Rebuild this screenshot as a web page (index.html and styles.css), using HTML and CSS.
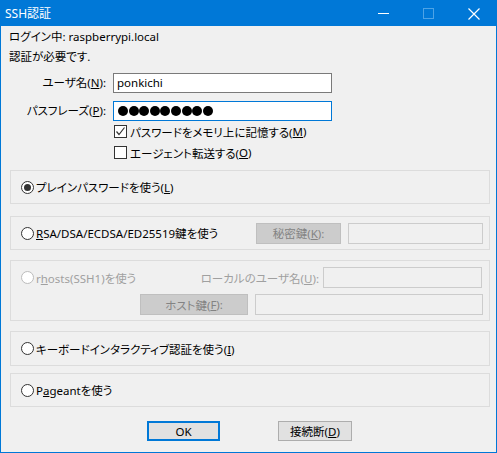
FILE: index.html
```html
<!DOCTYPE html>
<html lang="ja">
<head>
<meta charset="utf-8">
<title>SSH認証</title>
<link rel="stylesheet" href="styles.css">
</head>
<body>
<div class="window">
  <div class="titlebar">
    <span class="title">SSH認証</span>
    <div class="controls">
      <span class="ctl"><svg width="11" height="11" viewBox="0 0 11 11"><path d="M0 5.5H11" stroke="#fff" stroke-width="1"/></svg></span>
      <span class="ctl"><svg width="11" height="11" viewBox="0 0 11 11"><rect x="0.5" y="0.5" width="10" height="10" fill="none" stroke="#4da3e6" stroke-width="1"/></svg></span>
      <span class="ctl"><svg width="12" height="12" viewBox="0 0 12 12"><path d="M0.5 0.5L11.5 11.5M11.5 0.5L0.5 11.5" stroke="#fff" stroke-width="1.2"/></svg></span>
    </div>
  </div>
  <div class="content">
    <div class="line">ログイン中: raspberrypi.local</div>
    <div class="line">認証が必要です.</div>
    <div class="form">
      <span class="lbl">ユーザ名(<u>N</u>):</span>
      <div class="input">ponkichi</div>
      <span class="lbl">パスフレーズ(<u>P</u>):</span>
      <div class="input focus"><i class="dot"></i><i class="dot"></i><i class="dot"></i><i class="dot"></i><i class="dot"></i><i class="dot"></i><i class="dot"></i><i class="dot"></i><i class="dot"></i></div>
    </div>
    <div class="checks">
      <div class="check"><span class="cbox"><svg width="11" height="11" viewBox="0 0 11 11"><path d="M1.5 5.5L4 8.5L9.5 1.5" fill="none" stroke="#333" stroke-width="1.2"/></svg></span>パスワードをメモリ上に記憶する(<u>M</u>)</div>
      <div class="check"><span class="cbox"></span>エージェント転送する(<u>O</u>)</div>
    </div>

    <div class="group g1">
      <span class="radio checked"></span><span>プレインパスワードを使う(<u>L</u>)</span>
    </div>

    <div class="group g2">
      <span class="radio"></span><span><u>R</u>SA/DSA/ECDSA/ED25519鍵を使う</span>
      <div class="right">
        <span class="btn disabled key">秘密鍵(<u>K</u>):</span>
        <span class="input disabled keyfile"></span>
      </div>
    </div>

    <div class="group g3">
      <div class="row">
        <span class="radio disabled"></span><span class="muted">r<u>h</u>osts(SSH1)を使う</span>
        <span class="muted local">ローカルのユーザ名(<u>U</u>):</span>
        <span class="input disabled localuser"></span>
      </div>
      <div class="row row2">
        <span class="btn disabled hostkey">ホスト鍵(<u>F</u>):</span>
        <span class="input disabled hostfile"></span>
      </div>
    </div>

    <div class="group g4">
      <span class="radio"></span><span>キーボードインタラクティブ認証を使う(<u>I</u>)</span>
    </div>

    <div class="group g5">
      <span class="radio"></span><span>P<u>a</u>geantを使う</span>
    </div>

    <div class="buttons">
      <span class="btn default">OK</span>
      <span class="btn">接続断(<u>D</u>)</span>
    </div>
  </div>
</div>
</body>
</html>
```

FILE: styles.css
```css
* { box-sizing: border-box; }
html, body { margin: 0; padding: 0; }
body {
  width: 497px;
  height: 453px;
  overflow: hidden;
  background: #f0f0f0;
  font-family: "Noto Sans", "Noto Sans CJK JP", sans-serif;
  font-size: 11.5px;
  font-feature-settings: "palt";
  color: #000;
}
u { text-decoration: underline; text-underline-offset: 1px; }

.window {
  width: 497px;
  height: 453px;
  border: 1px solid #0078d7;
  background: #f0f0f0;
  display: flex;
  flex-direction: column;
}
.titlebar {
  height: 25px;
  flex-shrink: 0;
  background: #0078d7;
  color: #fff;
  display: flex;
  align-items: center;
}
.title { padding-left: 4px; line-height: 16px; font-size: 12px; }
.controls { margin-left: auto; display: flex; height: 100%; }
.ctl {
  width: 45px;
  display: flex;
  align-items: center;
  justify-content: center;
}
.ctl svg { display: block; }

.content { padding: 1px 6px 0 8px; }
.line { height: 20px; line-height: 20px; white-space: nowrap; }

.form {
  margin-top: 6px;
  display: grid;
  grid-template-columns: 97px 219px;
  column-gap: 7px;
  row-gap: 8px;
  align-items: center;
}
.lbl { text-align: right; white-space: nowrap; line-height: 16px; }
.input {
  display: block;
  height: 20px;
  border: 1px solid #7a7a7a;
  background: #fff;
  padding-left: 3px;
  line-height: 18px;
}
.input.focus {
  border-color: #0078d7;
  display: flex;
  align-items: center;
  gap: 0.6px;
  padding-left: 4px;
}
.dot {
  display: block;
  width: 10px;
  height: 10px;
  border-radius: 50%;
  background: #000;
}

.checks { margin-left: 105px; }
.check { height: 21px; display: flex; align-items: center; white-space: nowrap; }
.cbox {
  width: 13px;
  height: 13px;
  border: 1px solid #333;
  background: #fff;
  margin-right: 3px;
  display: flex;
  align-items: center;
  justify-content: center;
  flex-shrink: 0;
}
.cbox svg { display: block; }

.group {
  margin-left: 1px;
  width: 480px;
  border: 1px solid #dcdcdc;
  display: flex;
  align-items: center;
  padding: 0 6px 0 10px;
  white-space: nowrap;
}
.g1 { margin-top: 7px; height: 34px; }
.g2 { margin-top: 12px; height: 34px; }
.g3 {
  margin-top: 10px;
  height: 61px;
  flex-direction: column;
  align-items: stretch;
  padding-top: 6px;
}
.g4 { margin-top: 10px; height: 35px; }
.g5 { margin-top: 7px; height: 34px; }

.radio {
  width: 13px;
  height: 13px;
  border-radius: 50%;
  border: 1px solid #333;
  background: #fff;
  margin-right: 2px;
  flex-shrink: 0;
  display: flex;
  align-items: center;
  justify-content: center;
}
.radio.checked::after {
  content: "";
  width: 7px;
  height: 7px;
  border-radius: 50%;
  background: #333;
}
.radio.disabled { border-color: #bcbcbc; background: #fff; }
.muted { color: #a0a0a0; }

.right { margin-left: auto; display: flex; gap: 7px; align-items: center; }

.btn {
  display: flex;
  align-items: center;
  justify-content: center;
  height: 21px;
  border: 1px solid #adadad;
  background: #e1e1e1;
  color: #000;
  white-space: nowrap;
}
.btn.disabled {
  background: #cccccc;
  border-color: #bfbfbf;
  color: #838383;
}
.input.disabled {
  background: #f0f0f0;
  border-color: #cccccc;
  height: 21px;
}
.key { width: 85px; }
.keyfile { width: 135px; }

.row { display: flex; align-items: center; height: 21px; }
.row2 { margin-top: 6px; justify-content: flex-end; gap: 7px; }
.local { margin-left: auto; margin-right: 4px; }
.localuser { width: 159px; margin-right: 1px; }
.hostkey { width: 108px; }
.hostfile { width: 228px; }

.buttons {
  margin-top: 14px;
  display: flex;
  justify-content: center;
  gap: 58px;
}
.buttons .btn { width: 73px; height: 20px; }
.buttons .btn + .btn { width: 74px; }
.btn.default { border: 2px solid #0078d7; }
```
